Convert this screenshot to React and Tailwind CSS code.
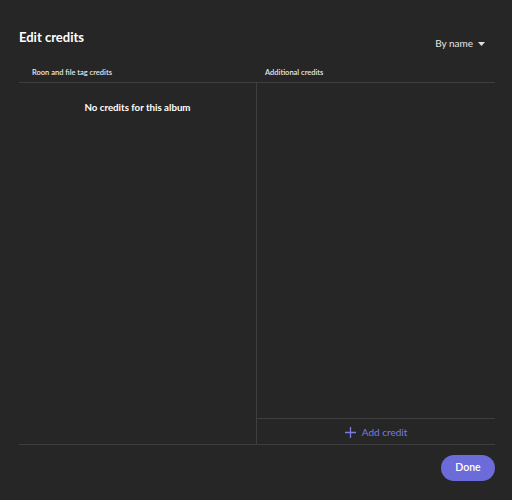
export default function App() {
  return (
    <div className="w-[512px] h-[500px] bg-[#262626] text-white flex flex-col pl-[19px] pr-[17px]" style={{ fontFamily: "Lato, 'Noto Sans', sans-serif" }}>
      <div className="flex justify-between h-[64px]">
        <div className="pt-[29px] text-[13px] font-bold leading-[16px]">Edit credits</div>
        <div className="pt-[37px] pr-[10px] flex items-start gap-[5px] text-[10px] text-[#e6e6e6] leading-[13px]">
          <span>By name</span>
          <svg width="7" height="4" viewBox="0 0 7 4" className="mt-[5px]"><path d="M0 0h7L3.5 4z" fill="#e0e0e0" /></svg>
        </div>
      </div>
      <div className="flex h-[19px] border-b border-[#3e3e3e] text-[7.5px] font-semibold text-[#e8e8e8]">
        <div className="w-[238px] pl-[13px] pt-[3px]">Roon and file tag credits</div>
        <div className="flex-1 pl-[8px] pt-[3px]">Additional credits</div>
      </div>
      <div className="flex h-[362px] border-b border-[#3e3e3e]">
        <div className="w-[238px] border-r border-[#3e3e3e] flex justify-center pt-[17px] text-[9.7px] font-bold leading-[14px]">No credits for this album</div>
        <div className="flex-1 flex flex-col">
          <div className="flex-1"></div>
          <div className="h-[26px] border-t border-[#3e3e3e] flex items-center justify-center gap-[6px] pt-[1px] text-[10px] text-[#7b7be3]">
            <svg width="11" height="11" viewBox="0 0 11 11"><path d="M5.5 0v11M0 5.5h11" stroke="#7b7be3" strokeWidth="1.3" /></svg>
            <span>Add credit</span>
          </div>
        </div>
      </div>
      <div className="flex justify-end pt-[10px]">
        <div className="w-[54px] h-[26px] rounded-full bg-[#6b6bd9] flex items-center justify-center text-[10.5px] font-semibold">Done</div>
      </div>
    </div>
  );
}
